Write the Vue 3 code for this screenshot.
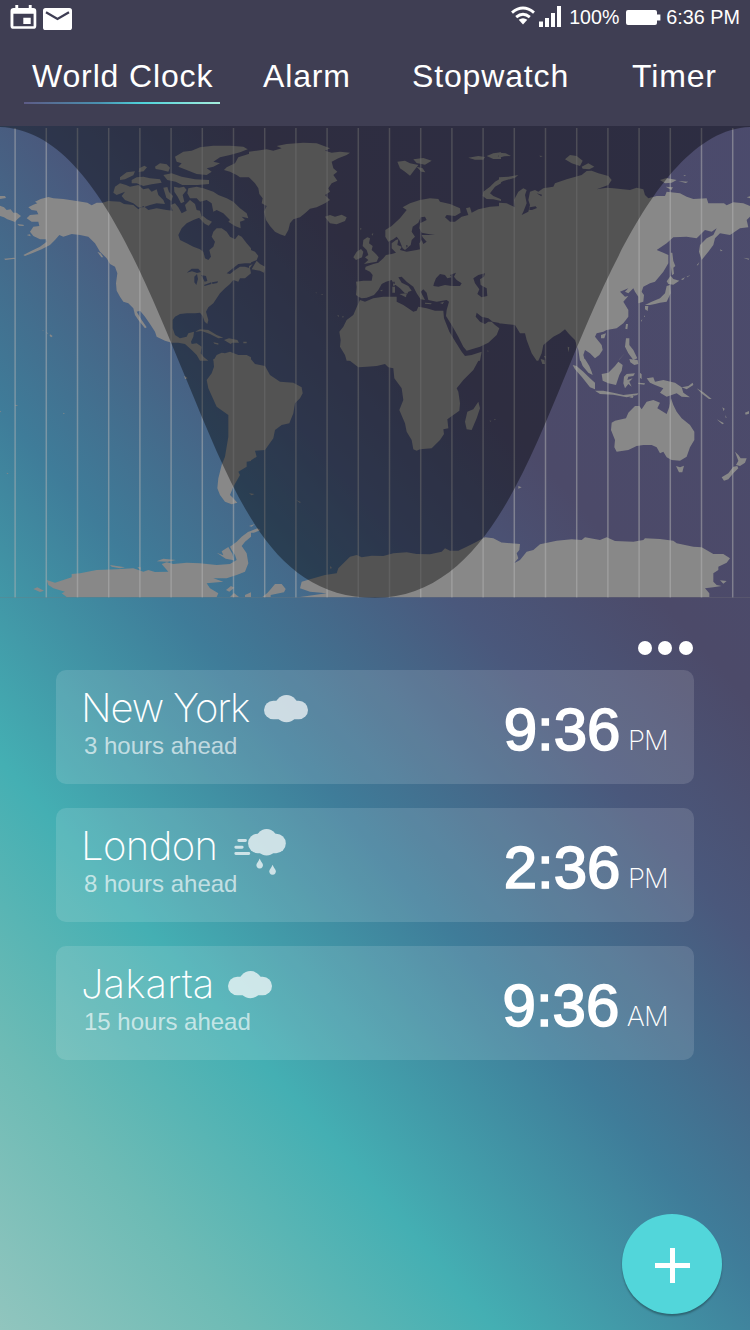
<script setup>
const tabs = ['World Clock', 'Alarm', 'Stopwatch', 'Timer']
const cities = [
  { name: 'New York', cls: 'ny', ahead: '3 hours ahead', time: '9:36', half: 'PM', weather: 'cloud' },
  { name: 'London', cls: 'ldn', ahead: '8 hours ahead', time: '2:36', half: 'PM', weather: 'rain' },
  { name: 'Jakarta', cls: 'jkt', ahead: '15 hours ahead', time: '9:36', half: 'AM', weather: 'cloud' },
]
const meridians = Array.from({ length: 24 }, (_, i) => 15.1 + i * 31.2)

// Land outlines, split in six tiles; each tile has its own origin at triple resolution.
const tiles = [
  { x: 0, y: 120, d: `M0,257L12,262 20,270 32,268 40,278 50,278 63,288 52,298 45,306 35,302 22,298 12,292 0,288Z M0,228l15,0 3,6 -18,3z M52,312l18,2 2,4 -15,-1z M80,345l10,-2 2,6z
M85,262L100,254 112,250 105,245 122,237 145,231 160,235 190,237 230,243 262,248 275,256 290,248 308,248 325,243 360,245 372,252 400,255 415,268 430,258 445,270 470,265 500,270 518,272 512,255 525,250 535,262 545,280 560,272 555,255 570,240 585,252 590,270 600,272 605,290 580,300 560,310 545,325 535,345 540,360 560,370 580,380 600,388 610,395 615,415 625,420 633,410 628,390 640,380 645,365 635,350 640,335 650,325 665,325 680,335 690,350 705,358 715,345 725,350 740,370 753,385L753,430 735,430 715,432 695,448 680,460 690,462 705,450 720,440 735,440 750,445 753,460L735,475 720,475 715,485 700,480 690,492 675,505 660,520 650,535 640,550 625,562 618,575 625,600 622,612 614,605 608,588 600,578 585,580 560,580 540,582 525,590 518,600 518,625 525,645 540,655 560,650 565,640 582,635 580,650 573,665 575,672 590,670 605,680 602,700 612,712L625,722 600,722 590,705 575,690 555,672 535,668 515,668 495,662 470,650 465,635 450,612 435,590 420,572 410,575 425,600 440,622 435,625 415,600 405,585 400,565 385,550 370,545 360,530 350,512 348,490 352,460 345,440 330,432 320,415 300,395 285,370 265,350 240,345 215,342 190,350 178,345 165,360 150,375 125,388 100,398 75,408 70,405 95,392 120,380 140,365 138,358 120,358 100,348 90,335 100,320 118,318 115,305 95,305 80,295 90,285 115,283 110,272 95,270Z
M560,458l15,-12 20,0 8,10 -12,3 -15,-5z M583,470l8,-8 3,15 -5,18 -6,-8z M603,465l15,3 4,15 -8,2 -6,-12z M612,495l22,-8 0,5 -20,6z M636,487l18,-3 -2,5 -15,3z
M345,200L360,190 378,195 390,200 415,195 430,208 445,205 455,215 470,208 475,225 490,240 495,252 470,250 450,255 430,262 415,262 400,250 375,240 365,228 375,215 350,225 340,218Z
M360,172l20,-15 25,-3 -5,12 -25,12 -15,2z M395,180l15,-8 20,-2 20,5 30,3 5,10 -30,5 -25,5 -20,-8 -15,0z M418,145l15,-8 8,5 -10,12 -15,2z M465,140l15,-10 20,3 10,10 -5,12 -20,-5 -18,-3z M490,165l25,-5 30,10 40,8 42,2 0,12 -35,3 -45,0 -20,-10 -25,-5z
M525,110L550,95 575,92 600,82 640,77 690,77 730,80 743,88 720,97 690,105 660,112 640,125 660,130 640,140 620,145 635,155 620,165 590,162 560,150 535,140 545,130 530,125Z
M490,203l12,-2 5,15 12,12 -5,15 -15,-10z M522,200l15,3 15,-3 8,10 -12,15 5,20 -10,5 -10,-20 -10,-15z
M565,205L590,200 610,205 640,215 655,225 680,235 700,245 720,265 740,280 745,295 725,290 735,300 720,305 722,325 705,318 685,305 690,300 670,280 650,270 640,275 635,250 620,240 600,245 590,235 570,235 562,220Z
M597,293l12,-5 12,10 15,7 -10,12 -12,-6z
M753,100L715,112 705,130 680,142 672,150 690,155 710,165 720,172 753,172Z
M585,635L600,628 625,630 650,645 670,653 655,655 630,642 605,633Z M672,660l15,-5 25,5 5,8 -20,0 -5,4 -10,-6z M640,667l15,3 0,4 -12,-3z M730,665l10,0 0,5 -10,0z
M640,722L650,705 665,698 675,700 690,695 715,705 740,705 753,712 753,722Z M292,395l10,5 8,12 -6,0z M150,643l8,5 -4,4 -5,-4z M12,416l30,-3 4,3 -30,4z M125,630l6,2 0,2z M137,636l8,4 -2,1z` },
  { x: 250, y: 120, d: `M-3,95L20,92 50,88 70,92 95,85 80,78 110,72 160,68 200,70 240,85 225,92 245,98 270,95 300,98 290,105 265,115 245,125 250,145 262,155 250,165 262,182 245,190 235,205 240,215 225,225 240,240 225,250 200,262 180,266 165,280 150,292 130,298 120,310 115,330 105,348 90,343 75,335 60,318 48,300 42,275 50,258 35,250 38,235 28,222 25,205 15,190 -3,172Z
M225,290L240,285 255,290 275,284 290,292 285,303 260,313 240,310 232,300Z M-3,388L15,395 25,408 20,420 -3,430Z M5,448L20,422 30,432 45,440 42,458 30,452Z M-3,438L8,432 -3,448Z
M442,125L465,122 480,130 505,135 495,148 480,167 465,155 450,145Z M490,118l30,-4 25,8 -20,12 -25,-5z M500,140l18,5 8,12 -12,-2z M655,113l30,-5 20,3 -5,8 -25,0z M710,108l20,-8 23,-3 0,8 -10,3 10,4 0,5 -23,0z
M753,175L735,185 720,200 700,215 698,228 710,237 730,238 753,243 753,238 730,228 720,220 735,200 753,190Z
M340,360L352,352 360,355 357,370 368,378 365,390 378,402 386,412 380,425 362,428 342,432 355,420 345,412 355,405 350,390 338,378Z M320,395L333,387 340,395 336,412 318,420 310,412Z M365,342l5,-2 -3,7z M330,324l5,2 -3,4z
M347,440L370,432 385,428 400,415 408,405 425,402 438,398 425,385 425,370 438,360 445,358 442,375 455,380 450,390 470,395 500,390 510,388 508,370 515,360 520,372 530,365 518,352 515,345 555,345 535,342 515,338 508,325 510,310 530,300 525,290 512,292 505,308 488,320 485,335 495,350 485,360 482,375 465,390 458,385 448,360 440,350 430,358 415,365 406,350 406,330 425,318 450,295 470,270 458,262 480,250 510,240 540,235 565,237 570,245 600,252 630,265 632,278 615,288 590,285 585,292 600,305 615,305 635,290 655,285 648,265 660,262 665,278 685,268 720,260 753,258L753,610 728,605 715,595 695,590 680,578 677,590 690,605 705,612 715,605 725,605 735,615 748,625 740,645 715,668 690,680 650,692 640,680 625,650 605,615 588,588 590,570 597,545 590,540 560,545 535,540 530,518 520,508 512,515 525,540 512,538 500,520 490,500 470,485 455,470 445,472 455,488 475,498 485,512 475,515 470,525 450,505 430,490 425,480 408,485 395,492 385,510 372,525 350,533 335,535 325,530 318,525 320,500 318,485 340,482 365,482 368,465 360,455 345,448Z
M552,490L558,475 570,462 585,465 592,475 605,472 600,465 618,458 612,470 620,480 635,490 630,498 605,498 585,495 565,500 550,498Z M670,475L685,465 705,460 702,470 690,478 692,495 710,505 712,528 695,532 682,522 688,508 675,490Z
M427,500l8,0 0,18 -8,0z M430,485l4,0 0,12 -5,0z M448,522l22,-2 -2,12z M525,548l20,2 -2,3 -18,-2z M570,549l12,-4 -4,7z M390,512l8,-3 -2,5z M468,375l6,2 -4,6z
M330,540L345,545 370,535 400,530 440,530 440,545 460,555 490,575 500,572 505,560 530,565 555,572 580,572 582,595 598,635 618,668 635,695 645,708 665,705 695,695 690,722 290,722 285,705 270,680 272,660 268,635 280,620 290,600 310,585 320,562Z M262,586l4,0 0,6z M277,588l5,2 -4,3z M195,518l6,0 0,2z M212,522l6,0 0,3z M710,692l5,0 0,3z` },
  { x: 500, y: 120, d: `M-3,248L20,250 45,262 42,240 55,215 70,205 80,210 75,225 80,250 70,275 65,285 85,275 90,255 85,240 90,215 105,210 115,215 130,205 160,200 165,190 200,178 245,165 260,153 275,152 295,160 325,168 335,180 325,195 290,208 320,203 340,205 390,210 410,203 430,208 435,225 445,235 470,228 495,228 500,215 540,220 560,230 580,237 620,235 625,250 672,250 680,256 700,247 730,250 750,258L750,290 740,300 745,322 720,325 690,345 660,340 645,355 640,375 625,395 605,420 597,395 600,375 620,355 640,345 650,325 635,335 615,330 600,345 590,355 560,350 520,352 500,370 470,390 490,398 505,405 505,430 490,455 465,485 450,490 430,500 425,515 432,525 430,545 415,550 415,530 405,515 400,505 385,520 375,515 385,505 360,515 375,530 385,528 370,545 385,570 385,590 370,610 350,625 320,630 310,635 290,640 285,650 305,675 308,690 298,705 285,715 270,700 255,690 250,705 255,722L240,722 235,690 225,660 215,650 205,640 195,628 180,640 160,650 130,675 125,700 115,722 110,722 95,700 80,660 75,640 60,640 45,615 -3,610Z
M89,262l18,-3 4,5 -15,6 -8,0z M110,220l16,4 -2,5z
M512,398l5,0 3,25 6,15 -6,5 2,18 -6,5 -4,-30z M500,484l12,-17 8,10 18,5 -18,12 -15,-2z M500,498L510,495 512,520 500,545 480,548 465,552 450,555 435,555 455,545 480,535 495,520Z M435,558l10,0 -2,15 -8,-5z M378,612l6,0 -2,16 -6,-2z M303,645l15,-5 -5,15 -10,0z M378,655L388,655 388,675 400,690 412,715 400,720 385,700 375,680Z M355,722L375,700 358,718Z M543,478l12,-6 -6,8z M560,470l12,-6 -10,8z M590,436l8,-10 -4,10z M423,602l4,-4 -2,7z M432,590l3,-4 0,5z
M-3,172L25,170 55,165 45,173 10,183 -3,190Z M195,118L210,105 230,108 248,122 240,138 215,130Z M245,140l20,-10 18,10 -15,8 -20,-2z M480,180l20,-6 30,6 -15,8 -20,2z M535,183l30,2 -8,4z M497,200l22,2 -5,8z M-3,98l20,2 16,8 -20,1 -16,4z M740,232l10,-3 0,6z M118,107l10,1 -6,3z M203,680l5,2 -3,15z M550,166l8,0 -4,3z M660,388l8,4 -6,2z M730,413l18,3 -2,3z M132,708l5,0 0,10z` },
  { x: 0, y: 360, d: `M617,-3L640,-3 642,20 635,40 620,60 625,85 650,140 685,165 685,230 675,290 665,315 655,355 652,385 660,405 675,425 695,433 712,428 700,415 690,405 700,380 720,345 715,335 740,320 740,305 753,303 753,-3Z
M140,660L165,668 190,660 215,652 215,642 240,640 290,630 350,628 400,625 430,635 445,630 465,636 505,635 485,612 500,607 520,612 560,608 600,610 650,615 690,612 710,600 705,585 695,570 690,560 710,545 725,530 745,515 753,515L753,530 735,545 725,558 740,580 745,610 735,635 710,645 680,655 640,655 670,665 620,670 630,685 655,700 650,711 200,711 185,700 195,695 160,685 145,675Z
M100,687l12,-5 20,10 -12,4z M470,604l20,-8 38,4 -25,5z M330,615l20,3 25,4 -15,3 -25,-5z M412,622l10,0 0,8z M650,578l20,8 -5,-12 20,-13 12,20 5,20 -25,-5z M678,690l15,-12 10,5 -15,12z M690,711l12,-12 15,12z M735,705l18,-8 0,14 -18,0z M553,48l5,2 5,5 -8,2z M45,134l10,2 -8,2z M20,338l6,2 -5,2z M190,158l5,3 -5,1z M250,102l8,8z M0,153l4,2 -4,2z` },
  { x: 250, y: 360, d: `M-3,-9L5,0 15,12 45,18 60,45 90,65 130,68 155,82 158,100 150,115 135,130 130,160 118,190 95,195 75,210 70,235 45,270 15,272 20,290 0,303 -3,303Z
M293,-3L325,22 350,20 380,18 405,12 415,22 430,25 433,55 455,85 460,120 448,150 465,190 470,215 485,240 490,268 500,272 510,268 545,265 570,240 582,222 580,208 595,205 592,178 628,152 630,130 625,95 620,85 640,60 670,30 688,-3Z M685,125L690,145 680,175 665,210 650,208 645,185 652,155 670,148Z
M150,685L155,665 180,658 225,645 260,640 265,625 290,600 300,590 320,585 335,592 365,587 400,588 430,580 470,577 500,582 540,583 575,575 585,565 600,572 625,572 650,560 680,545 705,532 730,535 753,547 753,711 150,711 230,700 180,695Z
M60,690l15,-18 20,0 12,15 -5,10 -40,8 0,6 -25,0 15,-12z M-3,515l25,-10 10,5 -20,8 -15,0z M-3,498l18,-6 -10,8z M-3,400l16,2 -8,4z M138,420l14,6 -2,3z M718,182l6,0 -2,3z M732,178l5,-1 -2,4z M240,618l6,6 -5,2z` },
  { x: 500, y: 360, d: `M122,-3l11,3 2,12 -8,0z M218,15L230,18 250,35 270,55 285,68 285,88 270,82 245,50 225,28Z M240,-3L255,-3 268,18 275,35 278,45 265,38 248,18Z M305,42L325,38 345,18 355,5 368,15 365,32 358,45 348,75 325,70 308,62Z M285,92L310,92 340,98 370,105 415,100 412,105 380,112 340,104 300,102Z M372,50L380,42 405,40 400,48 385,50 382,60 398,55 388,65 395,80 385,72 375,85 370,70Z M388,-3l25,3 2,12 -12,3 -12,-8z M420,38l5,5 0,15 -5,-5z M415,68l20,2 -2,4 -18,-2z M388,112l14,-6 -4,8z
M440,55L460,52 465,65 490,60 525,68 545,82 550,98 570,112 545,110 530,100 500,110 480,98 490,85 465,75 450,68Z M545,82L565,78 578,68 580,75 560,88Z M590,85l20,12 25,20 -8,0 -20,-15z
M335,188L345,182 378,175 385,158 405,138 418,138 425,148 440,125 460,120 480,128 472,145 500,162 508,140 513,115 520,135 530,155 545,175 570,195 583,215 583,240 570,262 560,290 540,302 515,300 500,292 490,275 480,280 470,262 455,255 430,255 410,258 385,270 350,275 343,262 345,240 333,210Z M528,318l12,4 12,-5 -5,20 -10,0z
M705,275L715,285 722,295 740,295 735,308 720,318 708,315 715,302Z M712,318L715,325 700,340 685,358 672,362 665,352 685,340 700,320Z M650,178l22,12 -5,3z M735,158l12,-5 0,8 -10,3z M667,142l7,4 -3,8z M676,165l4,8 -3,0z M55,378l10,4 -10,4z
M-3,547L60,552 58,570 50,580 55,595 42,610 60,600 80,575 100,570 120,553 170,542 215,538 245,540 255,532 300,540 320,532 345,543 400,545 430,540 435,535 480,537 520,542 530,550 580,560 605,562 640,582 670,582 690,595 680,608 655,620 655,630 640,640 640,665 650,675 665,678 640,682 615,685 628,700 628,711 -3,711Z M660,661l20,2 -10,8z` },
]
</script>

<template>
  <div class="screen">
    <header class="top">
      <div class="status">
        <div class="notes">
          <svg class="cal" viewBox="0 0 27 26"><path fill="#fff" fill-rule="evenodd" d="M5 0h3v3h11V0h3v3h1.500a3.300 3.300 0 0 1 3.300 3.300V21.500a3.300 3.300 0 0 1-3.300 3.300H3.300A3.300 3.300 0 0 1 0 21.500V6.300A3.300 3.300 0 0 1 3.300 3H5zM3 9v13h21V9zM13.300 13.300h7.700v6.400h-7.700z" /></svg>
          <svg class="mail" viewBox="0 0 29 22"><rect width="29" height="22" rx="2.600" fill="#fff" /><path d="M3 4.200 14.500 11 26 4.200" fill="none" stroke="#3e3d53" stroke-width="2.300" /></svg>
        </div>
        <div class="system">
          <svg class="wifi" viewBox="0 0 24 19"><g fill="none" stroke="#fff" stroke-width="2.900"><path d="M1 6.600Q12-2.600 23 6.600" /><path d="M5.200 11.200Q12 5.400 18.800 11.200" /></g><path fill="#fff" d="M7.700 13.800Q12 10.800 16.300 13.800L12 18.500Z" /></svg>
          <svg class="signal" viewBox="0 0 22 21"><path fill="#fff" d="M0 15.500h4V21H0zM6 12h4v9H6zM12 7h4v14h-4zM18 0h4v21h-4z" /></svg>
          <span class="pct">100%</span>
          <svg class="battery" viewBox="0 0 35 15"><path fill="#fff" d="M2 0h27q2 0 2 2v2.500h3.400v6H31V13q0 2-2 2H2q-2 0-2-2V2q0-2 2-2z" /></svg>
          <span class="now">6:36 PM</span>
        </div>
      </div>
      <nav class="tabs">
        <a v-for="(t, i) in tabs" :key="t" class="tab" :class="{ active: i === 0 }">{{ t }}</a>
      </nav>
    </header>

    <svg class="map" viewBox="0 126 750 472">
      <g v-for="t in tiles" :key="t.x + '-' + t.y" :transform="`translate(${t.x} ${t.y}) scale(.33333)`">
        <path :d="t.d" fill="#888888" fill-rule="evenodd" />
      </g>
      <path v-for="m in meridians" :key="m" :d="`M${m} 128V597.500`" stroke="#b4b4b4" stroke-opacity=".5" stroke-width="1.500" />
      <path d="M0 126V127C85 130 135 255 187 381S275 597 375 598C475 597 520 485 563 381S665 130 750 127V126Z" fill="#000" fill-opacity=".39" />
      <path d="M0 597.500H750" stroke="#777" stroke-opacity=".35" stroke-width=".8" />
    </svg>

    <main class="body">
      <div class="more"><i></i><i></i><i></i></div>
      <section v-for="c in cities" :key="c.name" class="card">
        <div class="place">
          <div class="row">
            <h2 :class="c.cls">{{ c.name }}</h2>
            <svg v-if="c.weather === 'cloud'" class="cloud" viewBox="672 106 133 84" fill="#fff">
              <rect x="672" y="123" width="133" height="56" rx="28" /><ellipse cx="740" cy="148" rx="46" ry="32" /><ellipse cx="740" cy="147" rx="37" ry="41" />
            </svg>
            <svg v-else class="rain" viewBox="584 507 156 139" fill="#fff">
              <rect x="626" y="521" width="114" height="59" rx="29" /><ellipse cx="682" cy="547" rx="35" ry="40" />
              <path d="M598 542h20M589 562h19M589 581h39" stroke="#fff" stroke-width="9" stroke-linecap="round" />
              <path d="M661 596Q664 604 670 612A10 10 0 1 1 652 612Q658 604 661 596ZM700 615Q703 623 709 631A10 10 0 1 1 691 631Q697 623 700 615Z" />
            </svg>
          </div>
          <p>{{ c.ahead }}</p>
        </div>
        <div class="clock"><b>{{ c.time }}</b><span>{{ c.half }}</span></div>
      </section>
      <button class="add"><svg viewBox="0 0 35 35"><path d="M17.500 0V35M0 17.500H35" stroke="#fff" stroke-width="5" /></svg></button>
    </main>
  </div>
</template>

<style scoped>
.screen {
  position: relative;
  width: 750px;
  height: 1330px;
  overflow: hidden;
  color: #fff;
  font-family: "Liberation Sans", Arial, sans-serif;
  background: linear-gradient(49deg, #91c5be 0%, #6dbbb5 13%, #44afb3 26%, #3f7c99 42%, #4a587c 57%, #4c4a69 68%, #4b4b6d 100%);
}
.top { height: 126px; background: #3f3e53; }
.status { height: 36px; display: flex; justify-content: space-between; padding: 0 10px; font-size: 20px; }
.notes { display: flex; gap: 6px; padding-top: 5px; }
.cal { width: 27px; height: 25px; }
.mail { width: 29px; height: 22px; margin-top: 3px; }
.system { display: flex; align-items: flex-start; line-height: 23px; padding-top: 6px; }
.wifi { width: 24px; height: 19px; margin: 0 4px 0 0; }
.signal { width: 22px; height: 21px; margin-right: 8.500px; }
.pct { margin-right: 7px; font-size: 19.600px; }
.now { font-size: 19.800px; }
.battery { width: 35px; height: 15px; margin: 4px 5px 0 0; }
.system span { white-space: nowrap; }
.tabs { display: grid; grid-template-columns: 239px 149px 220px auto; padding-left: 24px; }
.tab { height: 66px; line-height: 81px; font-size: 32px; letter-spacing: .85px; white-space: nowrap; }
.active { width: 188px; height: 66px; padding-left: 8px; border-bottom: 2px solid; border-image: linear-gradient(90deg, #5d5a85, #4a91b0 38%, #4fd3da 60%, #a6eedd) 1; }
.map { display: block; width: 750px; height: 472px; }
.body { padding: 43px 56px 0; }
.more { display: flex; justify-content: flex-end; gap: 6.600px; height: 29px; padding-right: 1px; }
.more i { width: 14px; height: 14px; border-radius: 50%; background: #fff; }
.card { height: 114px; margin-bottom: 24px; border-radius: 10px; background: rgba(255, 255, 255, .13); display: flex; justify-content: space-between; padding: 0 26px 0 25px; box-sizing: border-box; }
.row { display: flex; height: 60px; padding-top: 14px; box-sizing: border-box; }
h2 { margin: 0; font: 250 40px/48px Inter, "Liberation Sans", sans-serif; white-space: nowrap; }
.ny { width: 168px; letter-spacing: -1.150px; }
.ldn { width: 138px; letter-spacing: -.600px; }
.jkt { width: 132px; letter-spacing: .100px; }
.cloud { width: 44px; height: 28px; margin: 11px 0 0 15px; opacity: .7; }
.rain { width: 52px; height: 46px; margin: 7px 0 0 15px; opacity: .7; }
p { margin: 2px 0 0 3px; font-size: 24px; line-height: 28px; color: rgba(255, 255, 255, .65); }
.clock { display: flex; align-items: baseline; height: 114px; line-height: 119px; }
.clock b { font-weight: 400; font-size: 60px; -webkit-text-stroke: 1.700px #fff; }
.clock span { font: 250 27.500px/40px Inter, "Liberation Sans", sans-serif; letter-spacing: -.800px; margin-left: 7.500px; }
.add { position: absolute; left: 622px; top: 1214px; width: 100px; height: 100px; padding: 0; border: 0; border-radius: 50%; background: #52d6da; box-shadow: 0 2px 2px rgba(0, 0, 0, .3); display: flex; align-items: center; justify-content: center; }
.add svg { width: 35px; height: 35px; margin: 2px 0 0 1px; }
</style>

<style>
body { margin: 0; }
</style>
